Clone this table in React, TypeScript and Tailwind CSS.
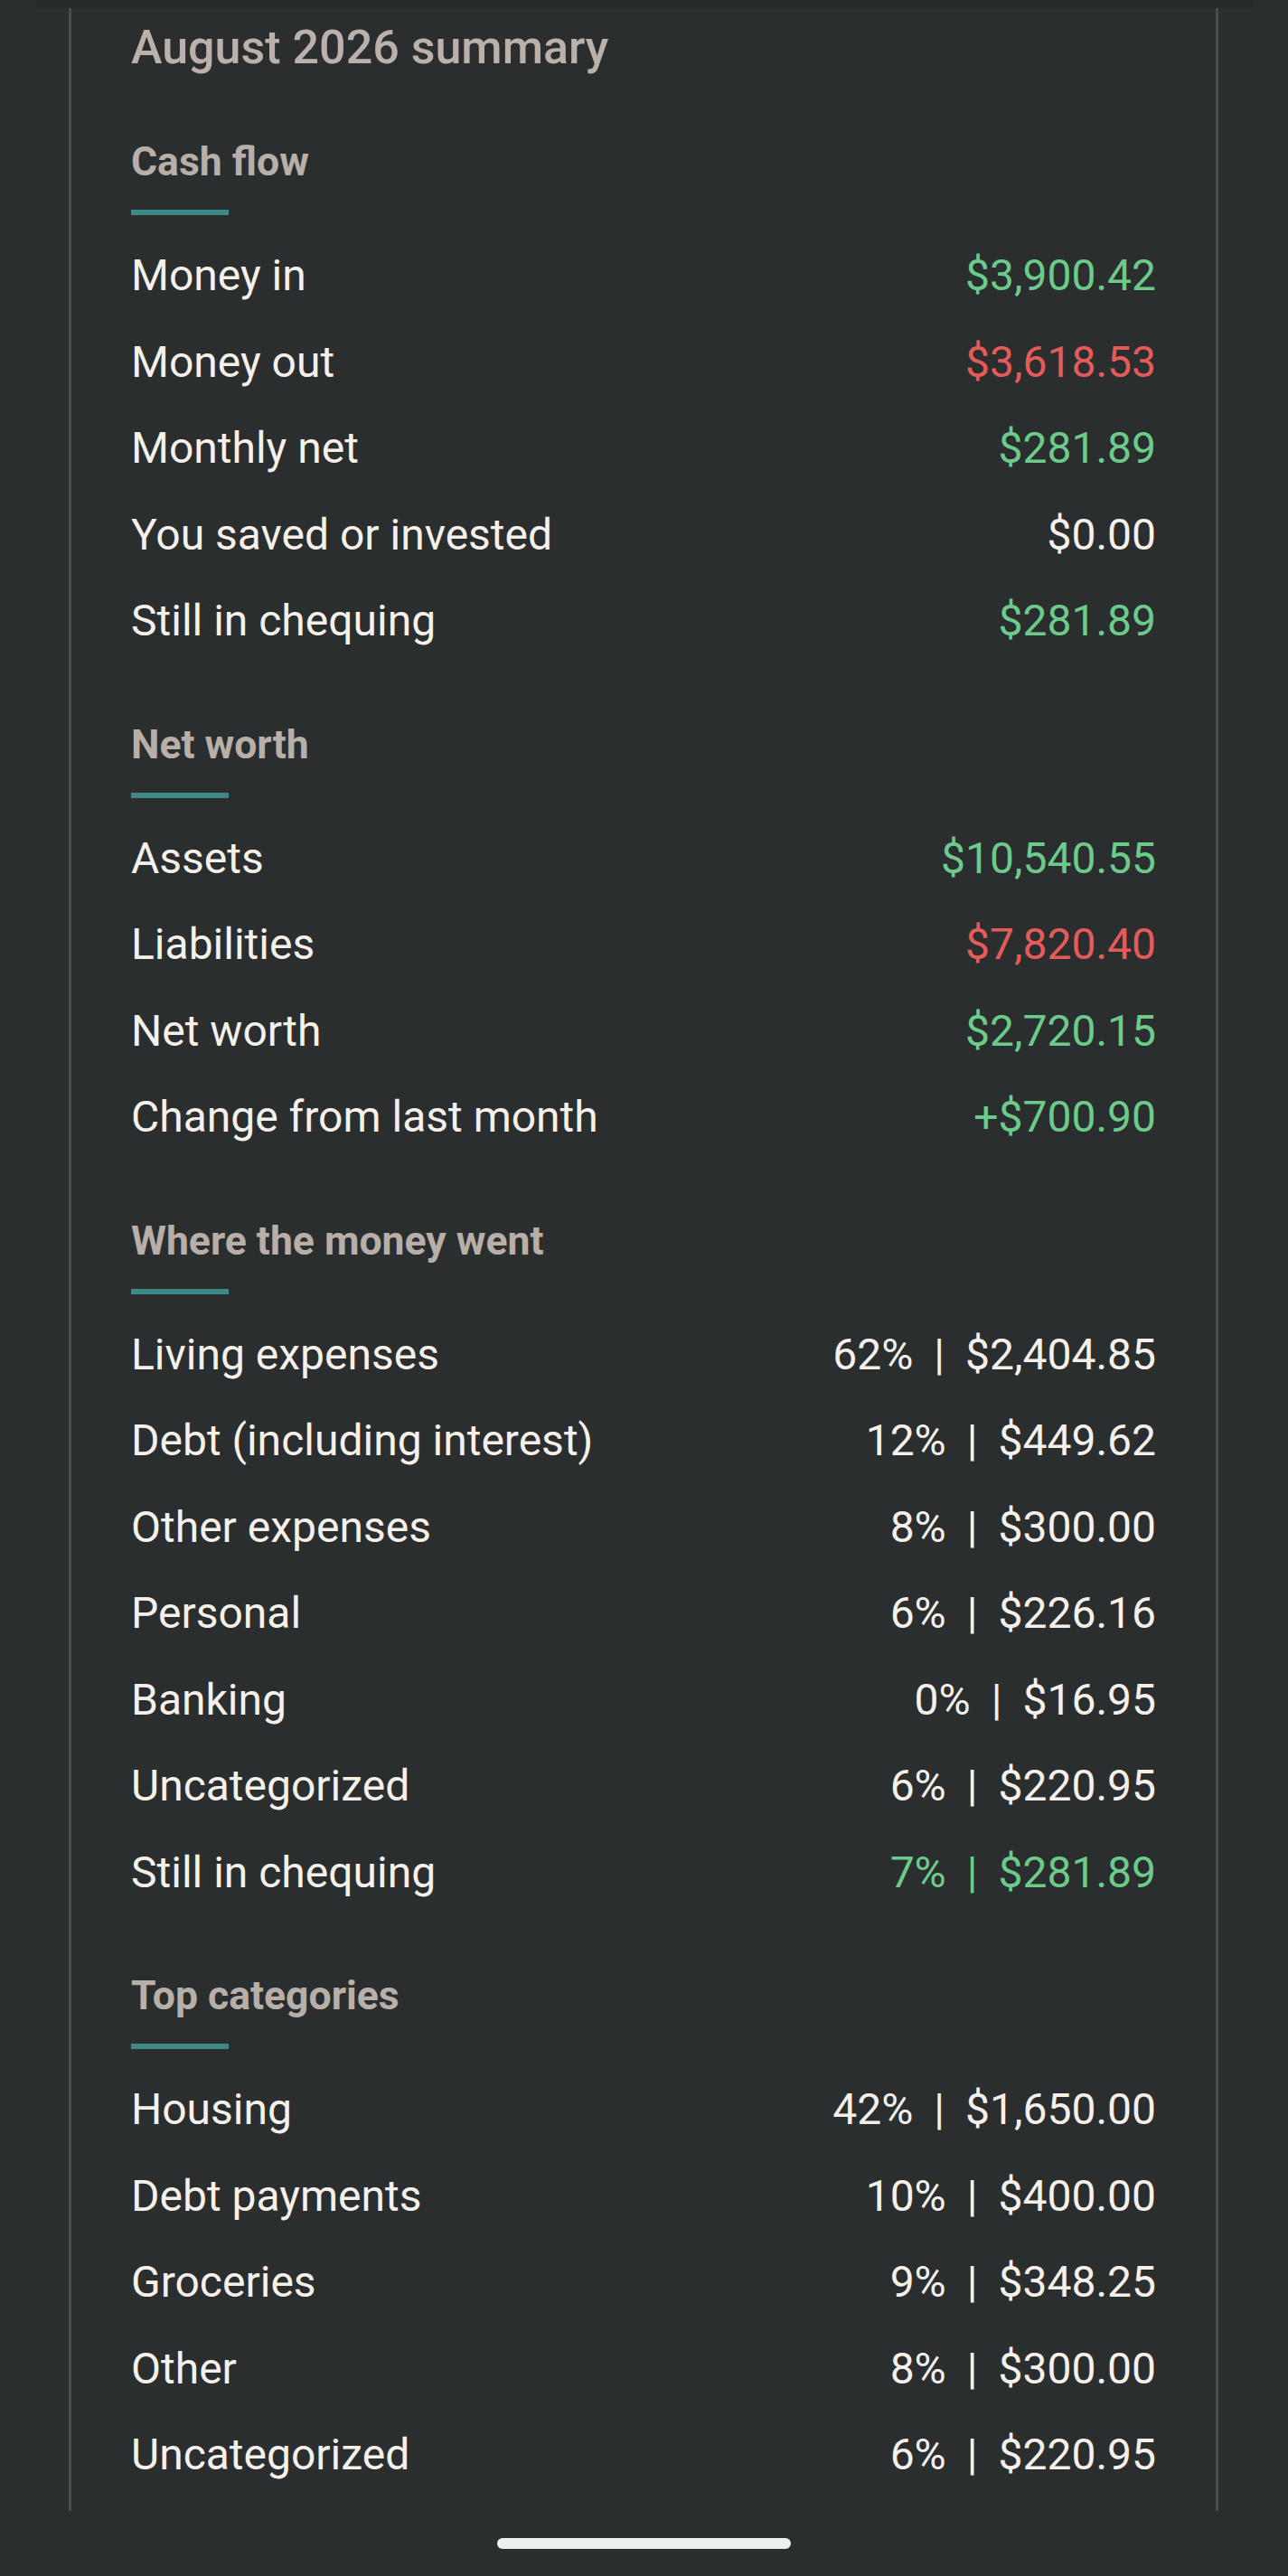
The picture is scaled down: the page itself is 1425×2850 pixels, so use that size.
import React from "react";

type Row = { label: string; value: string; pct?: string; tone?: "green" | "red" | "plain" };

const sections: { title: string; rows: Row[] }[] = [
  {
    title: "Cash flow",
    rows: [
      { label: "Money in", value: "$3,900.42", tone: "green" },
      { label: "Money out", value: "$3,618.53", tone: "red" },
      { label: "Monthly net", value: "$281.89", tone: "green" },
      { label: "You saved or invested", value: "$0.00", tone: "plain" },
      { label: "Still in chequing", value: "$281.89", tone: "green" },
    ],
  },
  {
    title: "Net worth",
    rows: [
      { label: "Assets", value: "$10,540.55", tone: "green" },
      { label: "Liabilities", value: "$7,820.40", tone: "red" },
      { label: "Net worth", value: "$2,720.15", tone: "green" },
      { label: "Change from last month", value: "+$700.90", tone: "green" },
    ],
  },
  {
    title: "Where the money went",
    rows: [
      { label: "Living expenses", pct: "62%", value: "$2,404.85" },
      { label: "Debt (including interest)", pct: "12%", value: "$449.62" },
      { label: "Other expenses", pct: "8%", value: "$300.00" },
      { label: "Personal", pct: "6%", value: "$226.16" },
      { label: "Banking", pct: "0%", value: "$16.95" },
      { label: "Uncategorized", pct: "6%", value: "$220.95" },
      { label: "Still in chequing", pct: "7%", value: "$281.89", tone: "green" },
    ],
  },
  {
    title: "Top categories",
    rows: [
      { label: "Housing", pct: "42%", value: "$1,650.00" },
      { label: "Debt payments", pct: "10%", value: "$400.00" },
      { label: "Groceries", pct: "9%", value: "$348.25" },
      { label: "Other", pct: "8%", value: "$300.00" },
      { label: "Uncategorized", pct: "6%", value: "$220.95" },
    ],
  },
];

function toneClass(t?: Row["tone"]) {
  if (t === "green") return "text-[#6ccb8a]";
  if (t === "red") return "text-[#e45b59]";
  return "text-[#f6f0ea]";
}

export default function App() {
  return (
    <div className="min-h-[2850px] w-full bg-[#2b2e2f] font-['Roboto','Noto_Sans',sans-serif] flex flex-col">
      <div className="mx-[40px] h-[9px] bg-[#272828]" />
      <div className="ml-[76px] mr-[77px] border-x-[3px] border-[#4a4d4f] px-[66px] pt-[12px] pb-[14.5px]">
        <h1 className="text-[52px] leading-[64px] font-medium text-[#bab2aa]">August 2026 summary</h1>
        {sections.map((s, i) => (
          <section key={s.title} className={i === 0 ? "mt-[68px]" : "mt-[63px]"}>
            <h2 className="text-[44.5px] leading-[52px] font-bold text-[#b7afa8]">{s.title}</h2>
            <div className="mt-[27px] h-[6px] w-[108px] bg-[#3f8a89]" />
            <div className="mt-[19px] flex flex-col">
              {s.rows.map((r, j) => (
                <div
                  key={j}
                  className="flex h-[95.5px] items-center justify-between text-[48px] leading-[95.5px] whitespace-nowrap"
                >
                  <span className="text-[#f6f0ea]">{r.label}</span>
                  <span className={toneClass(r.tone)}>
                    {r.pct ? (
                      <>
                        {r.pct}
                        <span className="mx-[23px]">|</span>
                      </>
                    ) : null}
                    {r.value}
                  </span>
                </div>
              ))}
            </div>
          </section>
        ))}
      </div>
      <div className="mt-[30px] mx-auto h-[12px] w-[325px] rounded-full bg-[#eef0ef]" />
    </div>
  );
}
